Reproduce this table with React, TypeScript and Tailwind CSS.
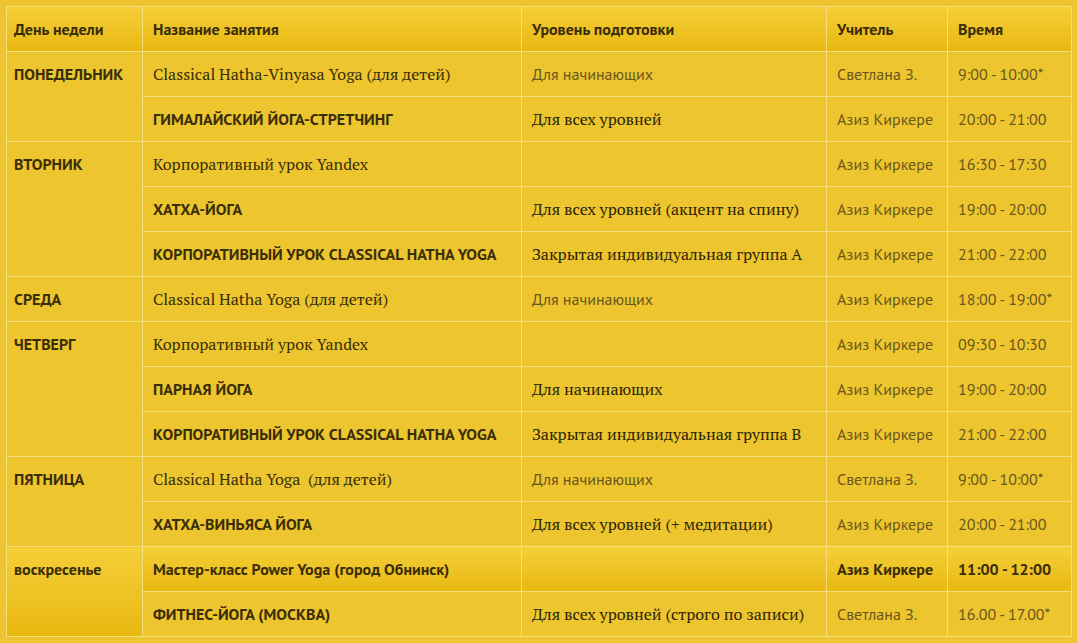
import React from "react";

type Row = {
  day?: string;
  span?: number;
  name: string;
  nameStyle: "serif" | "caps" | "sans";
  level: string;
  levelStyle: "muted" | "serif";
  teacher: string;
  time: string;
  highlight?: boolean;
};

const rows: Row[] = [
  { day: "ПОНЕДЕЛЬНИК", span: 2, name: "Classical Hatha-Vinyasa Yoga (для детей)", nameStyle: "serif", level: "Для начинающих", levelStyle: "muted", teacher: "Светлана З.", time: "9:00 - 10:00*" },
  { name: "ГИМАЛАЙСКИЙ ЙОГА-СТРЕТЧИНГ", nameStyle: "caps", level: "Для всех уровней", levelStyle: "serif", teacher: "Азиз Киркере", time: "20:00 - 21:00" },
  { day: "ВТОРНИК", span: 3, name: "Корпоративный урок Yandex", nameStyle: "serif", level: "", levelStyle: "muted", teacher: "Азиз Киркере", time: "16:30 - 17:30" },
  { name: "ХАТХА-ЙОГА", nameStyle: "caps", level: "Для всех уровней (акцент на спину)", levelStyle: "serif", teacher: "Азиз Киркере", time: "19:00 - 20:00" },
  { name: "КОРПОРАТИВНЫЙ УРОК CLASSICAL HATHA YOGA", nameStyle: "caps", level: "Закрытая индивидуальная группа А", levelStyle: "serif", teacher: "Азиз Киркере", time: "21:00 - 22:00" },
  { day: "СРЕДА", span: 1, name: "Classical Hatha Yoga (для детей)", nameStyle: "serif", level: "Для начинающих", levelStyle: "muted", teacher: "Азиз Киркере", time: "18:00 - 19:00*" },
  { day: "ЧЕТВЕРГ", span: 3, name: "Корпоративный урок Yandex", nameStyle: "serif", level: "", levelStyle: "muted", teacher: "Азиз Киркере", time: "09:30 - 10:30" },
  { name: "ПАРНАЯ ЙОГА", nameStyle: "caps", level: "Для начинающих", levelStyle: "serif", teacher: "Азиз Киркере", time: "19:00 - 20:00" },
  { name: "КОРПОРАТИВНЫЙ УРОК CLASSICAL HATHA YOGA", nameStyle: "caps", level: "Закрытая индивидуальная группа В", levelStyle: "serif", teacher: "Азиз Киркере", time: "21:00 - 22:00" },
  { day: "ПЯТНИЦА", span: 2, name: "Classical Hatha Yoga\u00a0 (для детей)", nameStyle: "serif", level: "Для начинающих", levelStyle: "muted", teacher: "Светлана З.", time: "9:00 - 10:00*" },
  { name: "ХАТХА-ВИНЬЯСА ЙОГА", nameStyle: "caps", level: "Для всех уровней (+ медитации)", levelStyle: "serif", teacher: "Азиз Киркере", time: "20:00 - 21:00" },
  { day: "воскресенье", span: 2, name: "Мастер-класс Power Yoga (город Обнинск)", nameStyle: "sans", level: "", levelStyle: "muted", teacher: "Азиз Киркере", time: "11:00 - 12:00", highlight: true },
  { name: "ФИТНЕС-ЙОГА (МОСКВА)", nameStyle: "caps", level: "Для всех уровней (строго по записи)", levelStyle: "serif", teacher: "Светлана З.", time: "16.00 - 17.00*" },
];

const sans = "font-['PT_Sans','Open_Sans','Liberation_Sans',sans-serif]";
const serif = "font-['PT_Serif','Liberation_Serif',serif]";

const cellBase = "border border-[#f6de7e] h-[45px] px-[10px] align-middle whitespace-nowrap leading-[24px]";

export default function App() {
  return (
    <div className="w-[1077px] h-[643px] bg-[#eec530] p-[6px] overflow-hidden">
      <table className="border-collapse table-fixed w-[1065px] text-[#3a2e08]">
        <colgroup>
          <col className="w-[136px]" />
          <col className="w-[379px]" />
          <col className="w-[305px]" />
          <col className="w-[121px]" />
          <col className="w-[124px]" />
        </colgroup>
        <thead>
          <tr className="bg-gradient-to-b from-[#f4cf36] to-[#e8b70b]">
            {["День недели", "Название занятия", "Уровень подготовки", "Учитель", "Время"].map((h, i) => (
              <th
                key={h}
                className={`${cellBase} ${i === 0 ? "pl-[7px]" : ""} text-left text-[16px] font-bold ${sans} text-[#3a2e08]`}
              >
                {h}
              </th>
            ))}
          </tr>
        </thead>
        <tbody>
          {rows.map((r, i) => (
            <tr
              key={i}
              className={r.highlight ? "bg-gradient-to-b from-[#f4cf36] to-[#e8b80c]" : "bg-[#edc52e]"}
            >
              {r.day && (
                <td
                  rowSpan={r.span}
                  className={`border border-[#f6de7e] pl-[7px] pr-[6px] pt-[10px] align-top leading-[24px] text-[16px] font-bold ${sans} ${
                    r.highlight ? "bg-gradient-to-b from-[#f4cf36] to-[#e8b80c]" : "bg-[#edc52e]"
                  }`}
                >
                  {r.day}
                </td>
              )}
              <td
                className={`${cellBase} ${
                  r.nameStyle === "serif" ? `${serif} text-[16px]` : `${sans} text-[16px] font-bold`
                }`}
              >
                {r.name}
              </td>
              <td
                className={`${cellBase} ${
                  r.levelStyle === "serif"
                    ? `${serif} text-[16px] font-medium text-[#2e2406]`
                    : `${sans} text-[16px] text-[#6a571c]`
                }`}
              >
                {r.level}
              </td>
              <td
                className={`${cellBase} ${sans} text-[16px] ${
                  r.highlight ? "font-bold text-[#3a2e08]" : "text-[#6a571c]"
                }`}
              >
                {r.teacher}
              </td>
              <td
                className={`${cellBase} ${sans} text-[16px] ${
                  r.highlight ? "font-bold text-[#3a2e08]" : "text-[#6a571c]"
                }`}
              >
                {r.time}
              </td>
            </tr>
          ))}
        </tbody>
      </table>
    </div>
  );
}
